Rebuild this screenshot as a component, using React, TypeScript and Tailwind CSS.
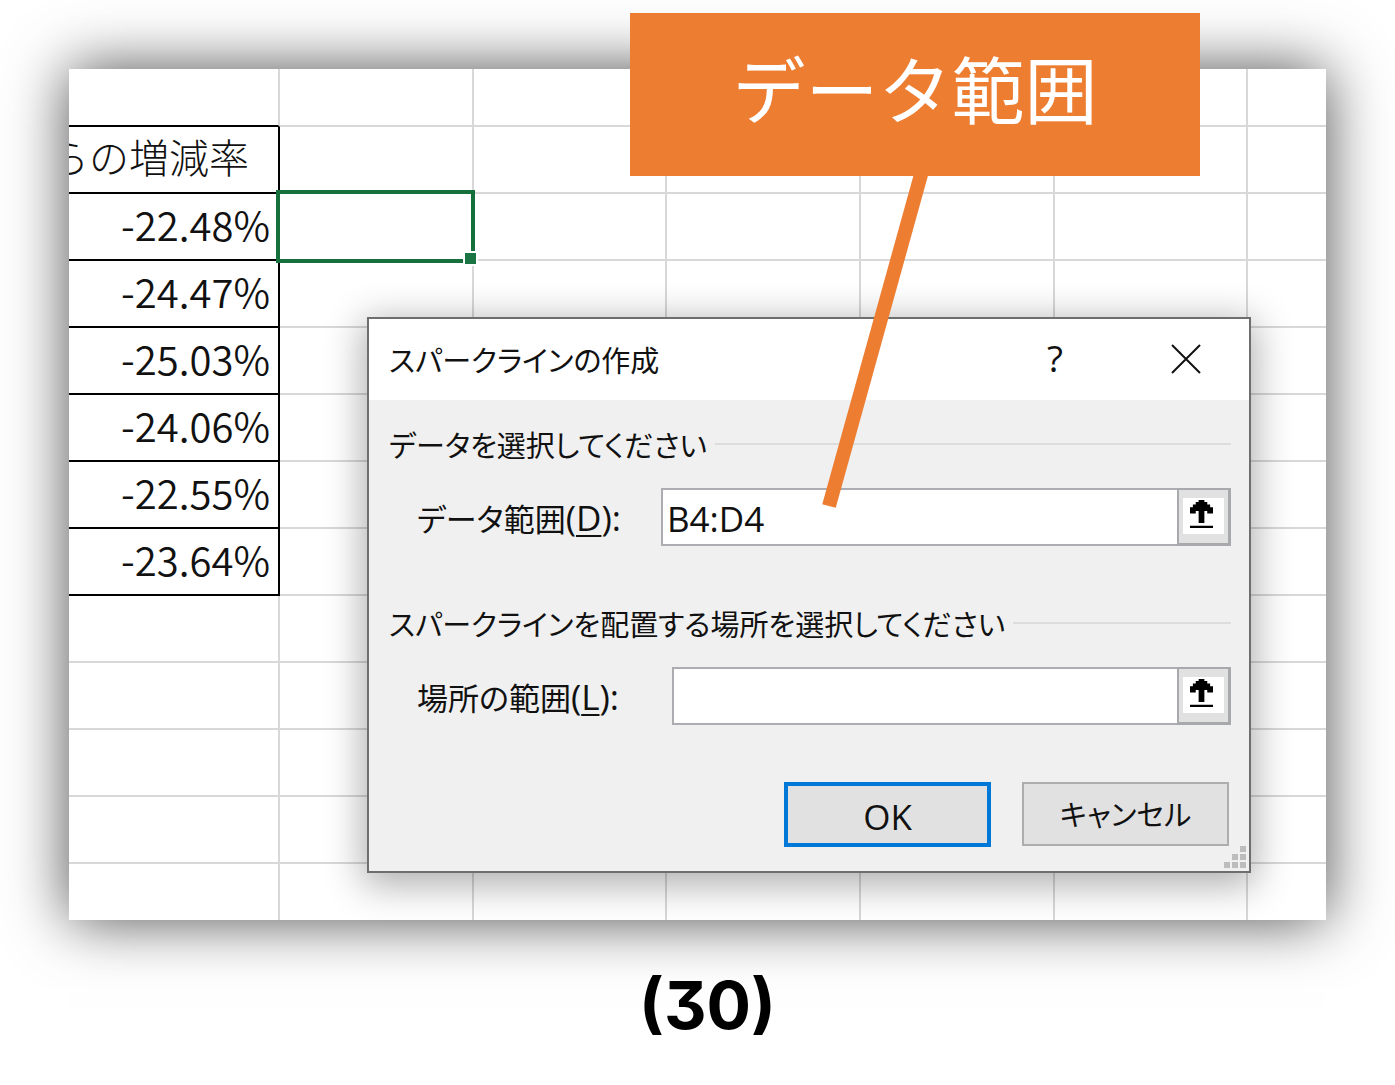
import { useState } from "react";

const rates = ["-22.48%", "-24.47%", "-25.03%", "-24.06%", "-22.55%", "-23.64%"];
const columnWidths = ["w-[194px]", "w-[193px]", "w-[194px]", "w-[194px]", "w-[193px]"];
const trailingRows = [0, 1, 2, 3];

function EmptyCells() {
  return (
    <>
      {columnWidths.map((_, c) => (
        <td key={c} className="border-r-2 border-b-2 border-[#d8d8d8]" />
      ))}
      <td className="border-b-2 border-[#d8d8d8]" />
    </>
  );
}

function Sheet() {
  return (
    <table className="w-full table-fixed border-separate border-spacing-0 text-[40px] leading-none font-[350] text-[#111]">
      <colgroup>
        <col className="w-[211px]" />
        {columnWidths.map((width, c) => (
          <col key={c} className={width} />
        ))}
        <col />
      </colgroup>
      <tbody>
        <tr className="h-[58px]">
          <td className="border-r-2 border-b-2 border-r-[#d8d8d8] border-b-black" />
          <EmptyCells />
        </tr>
        <tr className="h-[67px]">
          <th scope="col" className="overflow-hidden border-r-2 border-b-2 border-black p-0 pb-2 font-light">
            <div className="flex justify-end pr-[29px] whitespace-nowrap">らの増減率</div>
          </th>
          <EmptyCells />
        </tr>
        {rates.map((rate) => (
          <tr key={rate} className="h-[67px]">
            <td className="border-r-2 border-b-2 border-black p-0 pr-2 pb-1.5 text-right">{rate}</td>
            <EmptyCells />
          </tr>
        ))}
        {trailingRows.map((r) => (
          <tr key={r} className="h-[67px]">
            <td className="border-r-2 border-b-2 border-[#d8d8d8]" />
            <EmptyCells />
          </tr>
        ))}
        <tr className="h-14">
          <td className="border-r-2 border-[#d8d8d8]" />
          {columnWidths.map((_, c) => (
            <td key={c} className="border-r-2 border-[#d8d8d8]" />
          ))}
          <td />
        </tr>
      </tbody>
    </table>
  );
}

function PickButton({ label }: { label: string }) {
  return (
    <button
      type="button"
      aria-label={label}
      className="flex h-full w-[54px] shrink-0 items-center justify-center border-2 border-r-[3px] border-b-[3px] border-[#a7a9ac] bg-[#e1e1e1] pb-px"
    >
      <span className="flex h-9 w-[41px] items-center justify-center bg-white pr-1 pb-1">
        <svg viewBox="0 0 8 10" className="h-7 w-[23px]" preserveAspectRatio="none" fill="black">
          <path d="M3 0h2v.7h1v.9h1v1h1v2.2H6V3.9H5v4.3H3V3.9H2v.9H0V2.6h1v-1h1V.7h1zM0 9.2h8v.8H0z" />
        </svg>
      </span>
    </button>
  );
}

function SectionTitle({ children }: { children: string }) {
  return (
    <div className="flex h-12 items-center gap-2">
      <h2 className="whitespace-nowrap">{children}</h2>
      <div className="h-0.5 flex-1 bg-[#dcdcdc]" />
    </div>
  );
}

type FieldProps = {
  id: string;
  label: string;
  accessKey: string;
  value: string;
  onChange: (value: string) => void;
  labelWidth: string;
};

function RangeField({ id, label, accessKey, value, onChange, labelWidth }: FieldProps) {
  return (
    <div className="flex h-[58px] items-center pl-7">
      <label htmlFor={id} className={`shrink-0 text-[31px] whitespace-nowrap ${labelWidth}`}>
        {label}
        <span className="font-['Open_Sans'] text-[35px]">
          (<span className="underline decoration-2 underline-offset-4">{accessKey}</span>):
        </span>
      </label>
      <div className="flex h-full min-w-0 flex-1">
        <input
          id={id}
          value={value}
          onChange={(e) => onChange(e.target.value)}
          className="h-full min-w-0 flex-1 border-2 border-r-0 border-[#abadb3] bg-white px-1 pt-0.5 font-['Open_Sans'] text-[35px] outline-none"
        />
        <PickButton label={`${label}を選択`} />
      </div>
    </div>
  );
}

function SparklineDialog() {
  const [data, setData] = useState("B4:D4");
  const [place, setPlace] = useState("");
  return (
    <section
      role="dialog"
      aria-label="スパークラインの作成"
      className="absolute top-[248px] right-[75px] left-[298px] border-2 border-[#6e6e6e] bg-[#f0f0f0] text-[29px] leading-none font-normal text-[#111] shadow-[0_8px_36px_4px_rgba(0,0,0,0.32)] [font-feature-settings:'palt']"
    >
      <header className="flex h-[81px] items-center justify-between bg-white pr-12 pb-px pl-5">
        <h1>スパークラインの作成</h1>
        <div className="flex items-center gap-[100px]">
          <button type="button" aria-label="ヘルプ" className="w-8 pb-1 font-['Open_Sans'] text-[37px]">
            ?
          </button>
          <button type="button" aria-label="閉じる">
            <svg viewBox="0 0 30 30" className="size-[30px]" fill="none" stroke="#111" strokeWidth="2">
              <path d="M1 1l28 28M29 1L1 29" />
            </svg>
          </button>
        </div>
      </header>
      <div className="pt-5 pr-[18px] pb-6 pl-5">
        <SectionTitle>データを選択してください</SectionTitle>
        <div className="pt-5">
          <RangeField
            id="data-range"
            label="データ範囲"
            accessKey="D"
            value={data}
            onChange={setData}
            labelWidth="w-[244px]"
          />
        </div>
        <div className="pt-[53px]">
          <SectionTitle>スパークラインを配置する場所を選択してください</SectionTitle>
        </div>
        <div className="pt-5">
          <RangeField
            id="place-range"
            label="場所の範囲"
            accessKey="L"
            value={place}
            onChange={setPlace}
            labelWidth="w-[255px]"
          />
        </div>
        <div className="flex justify-end gap-[31px] pt-[57px] pr-0.5">
          <button
            type="button"
            className="h-[65px] w-[207px] border-4 border-[#0078d7] bg-[#e1e1e1] pt-1 font-['Open_Sans'] text-[35px]"
          >
            OK
          </button>
          <button type="button" className="h-16 w-[207px] border-2 border-[#adadad] bg-[#e1e1e1] pb-0.5">
            キャンセル
          </button>
        </div>
      </div>
      <svg viewBox="0 0 22 22" className="absolute right-[3px] bottom-[3px] size-[22px]" fill="#bdbdbd">
        <path d="M16 0h6v6h-6zM8 8h6v6H8zM16 8h6v6h-6zM0 16h6v6H0zM8 16h6v6H8zM16 16h6v6h-6z" />
      </svg>
    </section>
  );
}

export default function App() {
  return (
    <main className="bg-white px-[69px] pt-[69px] pb-10 font-['Noto_Sans_CJK_JP',sans-serif]">
      <figure>
        <div className="relative bg-white shadow-[0_0_58px_rgba(0,0,0,0.7)]">
          <Sheet />
          <div className="absolute top-[121px] left-[207px] h-[73px] w-[199px] border-4 border-[#15703b]">
            <span className="absolute -right-[7px] -bottom-[7px] size-[15px] border-2 border-white bg-[#1b7443]" />
          </div>
          <SparklineDialog />
          <svg viewBox="0 0 120 340" className="absolute top-[106px] left-[750px] h-[340px] w-[120px]" stroke="#ed7d31" strokeWidth="14">
            <path d="M103 -4L10 331" />
          </svg>
          <div className="absolute -top-14 left-[561px] flex h-[163px] w-[570px] items-center justify-center bg-[#ed7d31] pb-4 text-[73px] leading-none text-white">
            データ範囲
          </div>
        </div>
        <figcaption className="pt-[52px] pl-5 text-center font-['Inter'] text-[66px] leading-[66px] font-bold text-black [font-feature-settings:'cv09']">
          (30)
        </figcaption>
      </figure>
    </main>
  );
}
